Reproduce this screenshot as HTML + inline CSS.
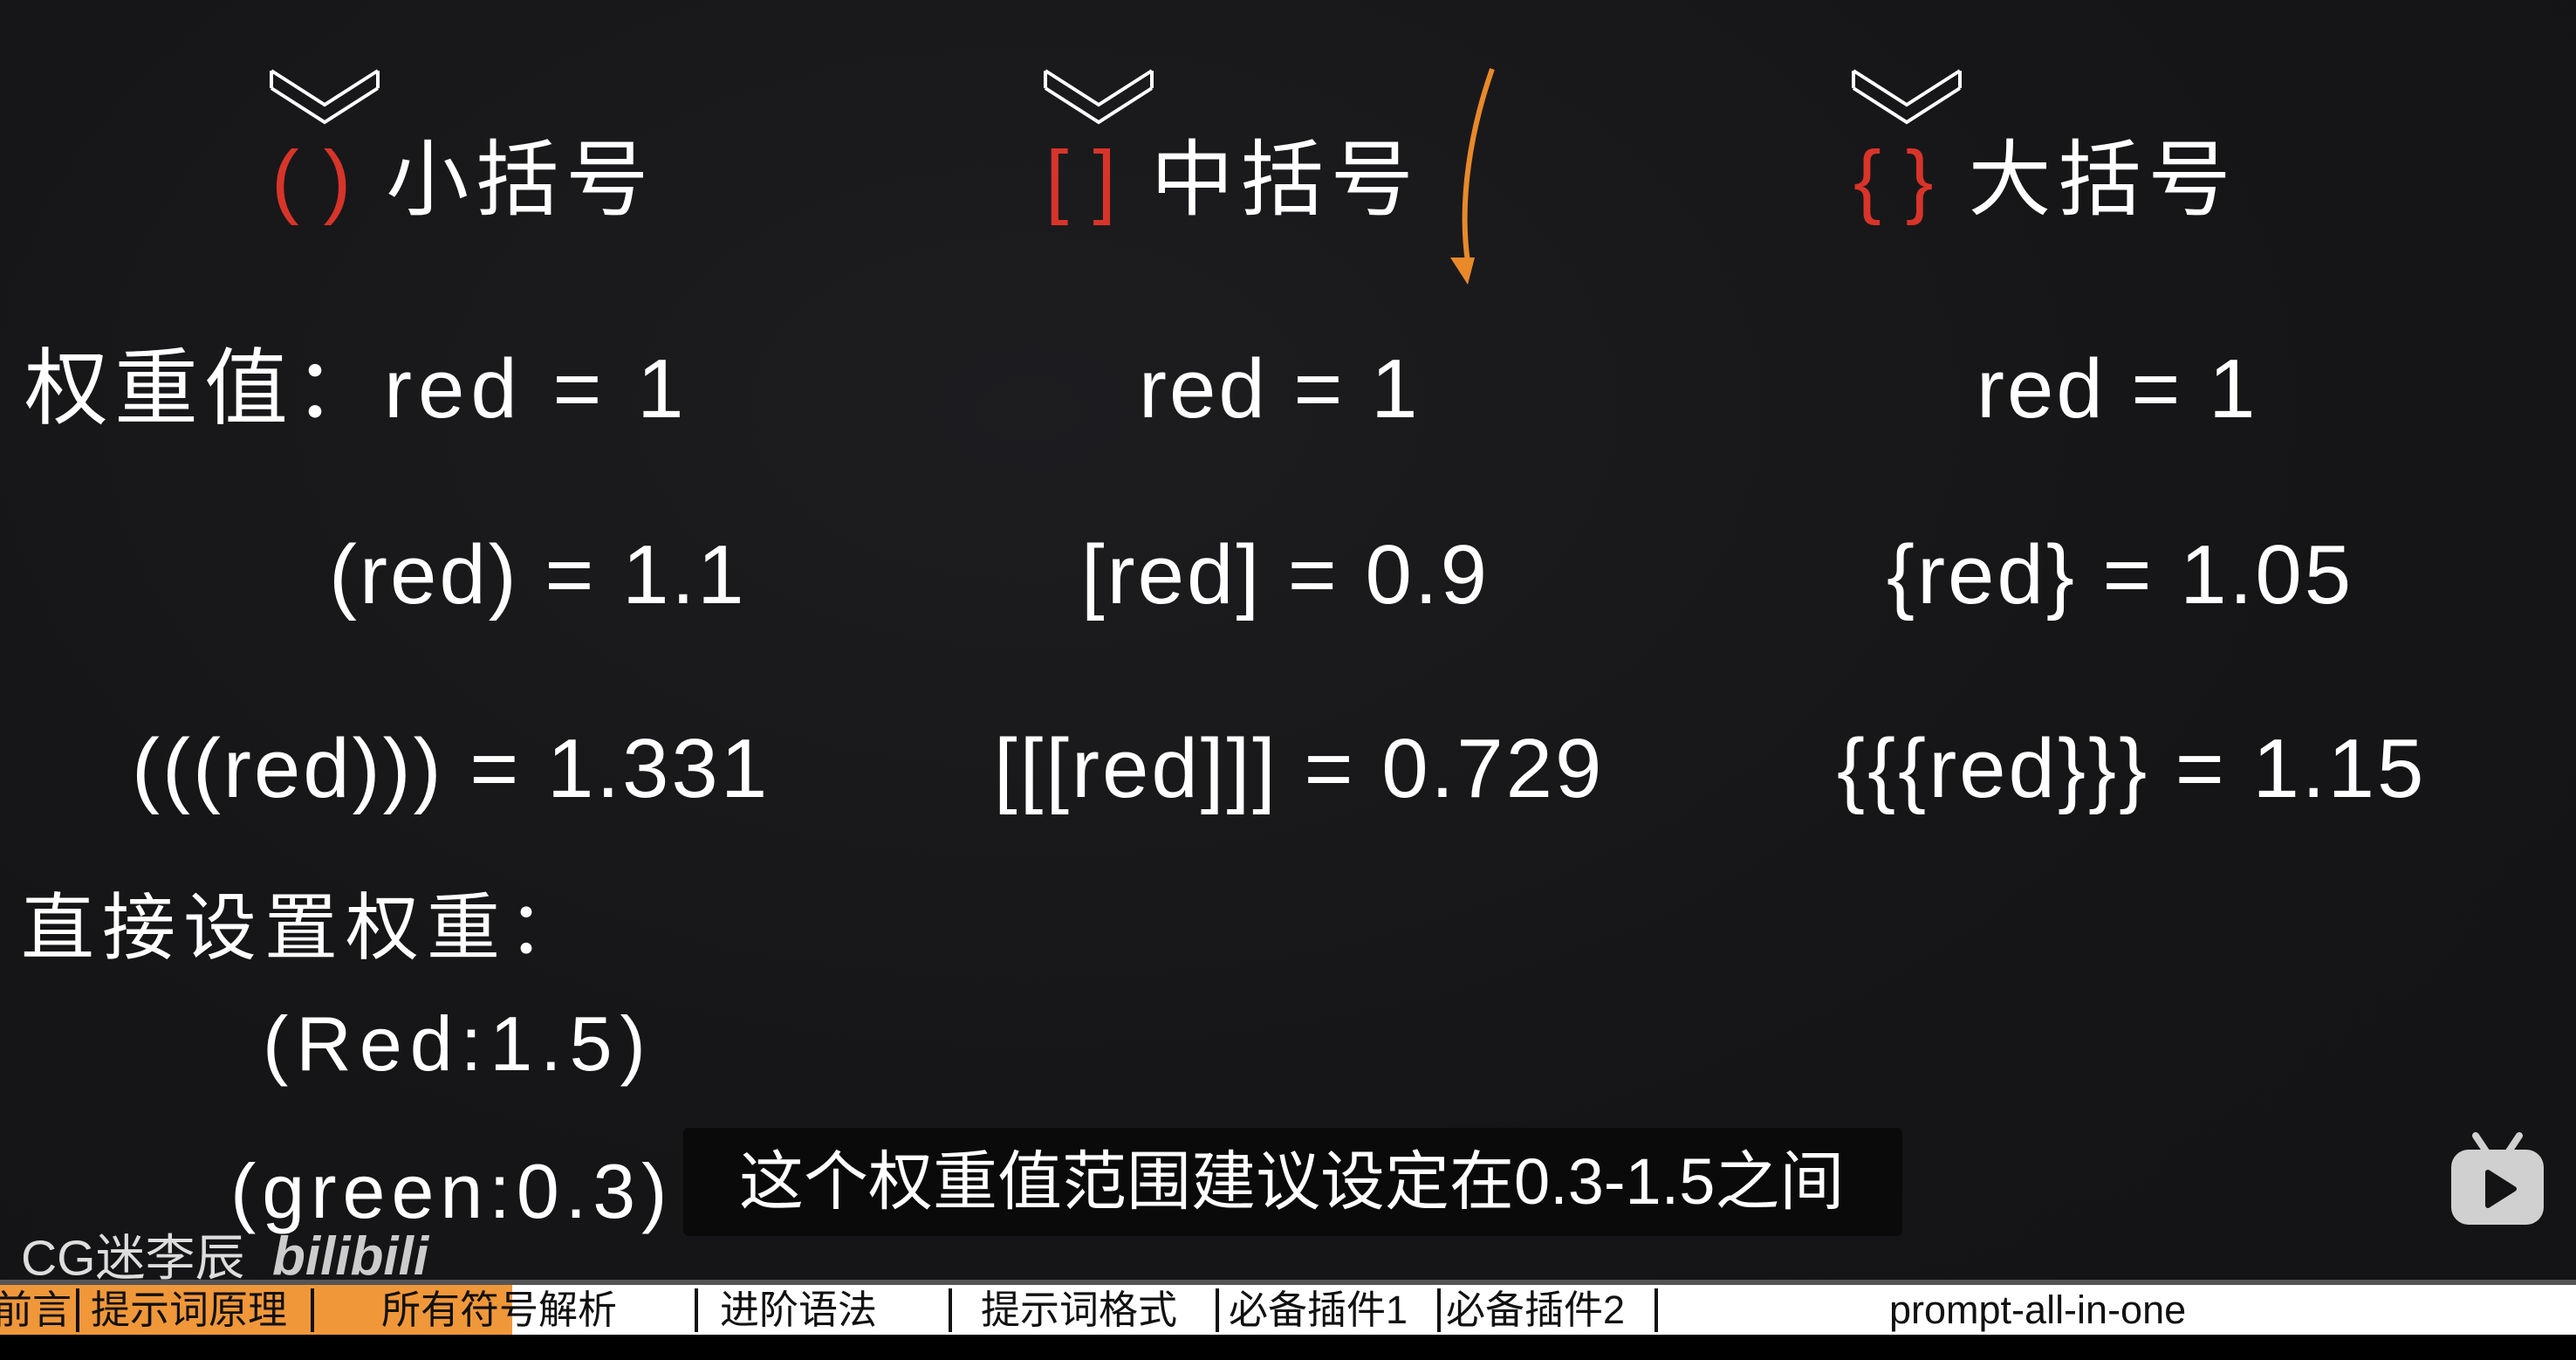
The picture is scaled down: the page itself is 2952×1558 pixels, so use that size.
<!DOCTYPE html>
<html><head><meta charset="utf-8"><style>
html,body{margin:0;padding:0}
body{width:2952px;height:1558px;overflow:hidden;position:relative;background:radial-gradient(ellipse at 40% 30%,#1d1d20 0%,#151517 60%,#141416 100%);font-family:"Liberation Sans","Noto Sans CJK SC",sans-serif;color:#fff}
.t{position:absolute;white-space:nowrap;line-height:1;transform:translateY(-50%)}
.r{color:#d8342a;letter-spacing:28px;margin-right:12px}
.h{font-size:95px;letter-spacing:8px}
.row{font-size:96px;letter-spacing:3px}
.bar{position:absolute;left:0;top:1472px;width:2952px;height:57px;background:#fff;overflow:hidden}
.bar span{position:absolute;top:4px;font-size:45px;color:#111;line-height:50px}
.dv{position:absolute;top:4px;width:4px;height:50px;background:#111}
</style></head><body>
<svg width="2952" height="400" style="position:absolute;left:0;top:0">
<g fill="none" stroke="#fff" stroke-width="4">
<path d="M311 81 L372 120 L433 81 M311 101 L372 140 L433 101 M311 81V101 M433 81V101"/>
<path d="M1198 81 L1259 120 L1320 81 M1198 101 L1259 140 L1320 101 M1198 81V101 M1320 81V101"/>
<path d="M2124 81 L2185 120 L2246 81 M2124 101 L2185 140 L2246 101 M2124 81V101 M2246 81V101"/>
</g>
<path d="M1710 79 C1685 150 1672 230 1682 300" fill="none" stroke="#e8892a" stroke-width="6"/>
<path d="M1662 295 L1690 295 L1682 326 Z" fill="#e8892a"/>
</svg>
<div class="t h" style="left:311px;top:207px"><span class="r">()</span>小括号</div>
<div class="t h" style="left:1198px;top:207px"><span class="r">[]</span>中括号</div>
<div class="t h" style="left:2124px;top:207px"><span class="r">{}</span>大括号</div>

<div class="t row" style="left:28px;top:446px;letter-spacing:7px">权重值：red = 1</div>
<div class="t row" style="left:1305px;top:446px">red = 1</div>
<div class="t row" style="left:2265px;top:446px">red = 1</div>
<div class="t row" style="left:377px;top:659px">(red) = 1.1</div>
<div class="t row" style="left:1239px;top:659px">[red] = 0.9</div>
<div class="t row" style="left:2162px;top:659px">{red} = 1.05</div>
<div class="t row" style="left:151px;top:881px">(((red))) = 1.331</div>
<div class="t row" style="left:1139px;top:881px">[[[red]]] = 0.729</div>
<div class="t row" style="left:2105px;top:881px">{{{red}}} = 1.15</div>

<div class="t" style="left:24px;top:1063px;font-size:84px;letter-spacing:9px">直接设置权重：</div>
<div class="t" style="left:301px;top:1196px;font-size:88px;letter-spacing:9px">(Red:1.5)</div>
<div class="t" style="left:264px;top:1365px;font-size:88px;letter-spacing:7px">(green:0.3)</div>

<div style="position:absolute;left:783px;top:1292px;width:1397px;height:124px;background:#0a0a0b;border-radius:6px"></div>
<div class="t" style="left:847px;top:1354px;font-size:74px">这个权重值范围建议设定在0.3-1.5之间</div>

<div class="t" style="left:24px;top:1442px;font-size:57px;color:#ddd">CG迷李辰</div>
<div class="t" style="left:312px;top:1440px;font-size:62px;color:#ccc;font-weight:bold;font-style:italic">bilibili</div>

<svg width="110" height="110" style="position:absolute;left:2807px;top:1297px" viewBox="0 0 110 110">
<path d="M30 4 L42 22 M80 4 L68 22" stroke="#d0d0d0" stroke-width="8" stroke-linecap="round"/>
<rect x="2" y="20" width="106" height="86" rx="20" fill="#d0d0d0"/>
<path d="M44 46 L44 84 L74 65 Z" fill="#141416" stroke="#141416" stroke-width="6" stroke-linejoin="round"/>
</svg>

<div style="position:absolute;left:0;top:1466px;width:2952px;height:6px;background:#555"></div>
<div class="bar">
<div style="position:absolute;left:0;top:0;width:587px;height:57px;background:#f0973a"></div>
<span style="left:-8px">前言</span>
<span style="left:104px">提示词原理</span>
<span style="left:437px">所有符号解析</span>
<span style="left:825px">进阶语法</span>
<span style="left:1124px">提示词格式</span>
<span style="left:1408px">必备插件1</span>
<span style="left:1657px">必备插件2</span>
<span style="left:2165px">prompt-all-in-one</span>
<div class="dv" style="left:87px"></div>
<div class="dv" style="left:356px"></div>
<div class="dv" style="left:796px"></div>
<div class="dv" style="left:1087px"></div>
<div class="dv" style="left:1393px"></div>
<div class="dv" style="left:1647px"></div>
<div class="dv" style="left:1896px"></div>
</div>
<div style="position:absolute;left:0;top:1529px;width:2952px;height:29px;background:#000"></div>
</body></html>
